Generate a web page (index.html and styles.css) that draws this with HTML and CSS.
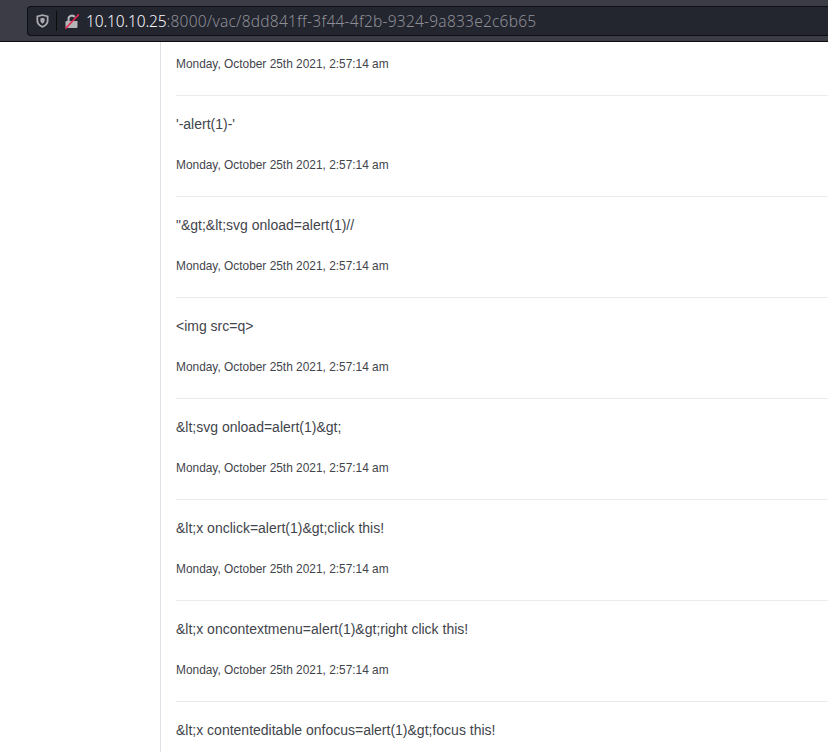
FILE: index.html
```html
<!DOCTYPE html>
<html lang="en">
<head>
<meta charset="utf-8">
<title>VAC</title>
<link rel="stylesheet" href="styles.css">
</head>
<body>
<header class="toolbar">
  <div class="urlbar">
    <svg class="shield" width="13" height="14" viewBox="0 0 14 15"><path fill-rule="evenodd" fill="#a9a9ae" d="M7 .3 13.500 1.800v5.400c0 3.300-2.600 6.100-6.500 7.500C3.100 13.300.5 10.500.5 7.200V1.800L7 .3Zm0 1.900L2.400 3.300v3.900c0 2.400 1.900 4.500 4.600 5.500 2.700-1 4.600-3.100 4.600-5.500V3.300L7 2.200Z"/><path fill="#a9a9ae" d="M4.700 4.700 7 4.100l2.300.6v2.600c0 1.200-.9 2.400-2.300 3.100-1.400-.7-2.300-1.900-2.300-3.100V4.700Z"/></svg>
    <span class="sep"></span>
    <svg class="lock" width="14" height="15" viewBox="0 0 14 15"><path fill="#b4b4b9" d="M1.500 7h1V5a4.500 4.500 0 0 1 8.100-2.700L9 3.700A2.500 2.500 0 0 0 4.500 5v2h6.500l1.500 0v6a1 1 0 0 1-1 1h-10a1 1 0 0 1-1-1V8a1 1 0 0 1 1-1Z"/><path stroke="#e22850" stroke-width="1.600" stroke-linecap="round" d="M.8 14.200 13.500 .8"/></svg>
    <span class="url"><span class="host">10.10.10.25</span><span class="path">:8000/vac/8dd841ff-3f44-4f2b-9324-9a833e2c6b65</span></span>
  </div>
</header>
<main class="page">
  <aside class="sidebar"></aside>
  <section class="feed">
    <article class="entry first"><p class="date">Monday, October 25th 2021, 2:57:14 am</p></article>
    <article class="entry"><p class="msg">'-alert(1)-'</p><p class="date">Monday, October 25th 2021, 2:57:14 am</p></article>
    <article class="entry"><p class="msg">"&amp;gt;&amp;lt;svg onload=alert(1)//</p><p class="date">Monday, October 25th 2021, 2:57:14 am</p></article>
    <article class="entry"><p class="msg">&lt;img src=q&gt;</p><p class="date">Monday, October 25th 2021, 2:57:14 am</p></article>
    <article class="entry"><p class="msg">&amp;lt;svg onload=alert(1)&amp;gt;</p><p class="date">Monday, October 25th 2021, 2:57:14 am</p></article>
    <article class="entry"><p class="msg">&amp;lt;x onclick=alert(1)&amp;gt;click this!</p><p class="date">Monday, October 25th 2021, 2:57:14 am</p></article>
    <article class="entry"><p class="msg">&amp;lt;x oncontextmenu=alert(1)&amp;gt;right click this!</p><p class="date">Monday, October 25th 2021, 2:57:14 am</p></article>
    <article class="entry"><p class="msg">&amp;lt;x contenteditable onfocus=alert(1)&amp;gt;focus this!</p></article>
  </section>
</main>
</body>
</html>
```
FILE: styles.css
```css
* { box-sizing: border-box; }
html, body { margin: 0; height: 752px; overflow: hidden; background: #fff; }
body { display: flex; flex-direction: column; font-family: "Liberation Sans", Arial, sans-serif; color: #3f454b; }
.toolbar { height: 42px; flex: none; background: #3b3c46; border-bottom: 1px solid #0c0c0d; padding: 6px 0 6px 27px; }
.urlbar { height: 30px; display: flex; align-items: center; background: #23252f; border: 1px solid #0e0f14; border-right: 0; border-radius: 4px 0 0 4px; padding-left: 8px; }
.shield { flex: none; }
.sep { width: 1px; height: 20px; background: #0c0c0d; margin: 0 8px 0 7px; }
.lock { flex: none; margin-right: 7px; }
.url { font-family: "Noto Sans", sans-serif; font-size: 15.5px; font-weight: 300; white-space: nowrap; }
.host { color: #fbfbfe; letter-spacing: -0.15px; }
.path { color: #8e8f96; letter-spacing: 0.23px; }
.page { flex: 1; display: flex; min-height: 0; }
.sidebar { width: 161px; flex: none; border-right: 1px solid #dee2e6; }
.feed { flex: 1; padding-left: 15px; }
.entry { height: 101px; padding-top: 20px; border-bottom: 1px solid #e9ecef; }
.entry.first { height: 54px; padding-top: 15px; }
.msg { margin: 0 0 25px; font-size: 14px; line-height: 17px; }
.date { margin: 0; font-size: 11.9px; line-height: 14px; }
```
